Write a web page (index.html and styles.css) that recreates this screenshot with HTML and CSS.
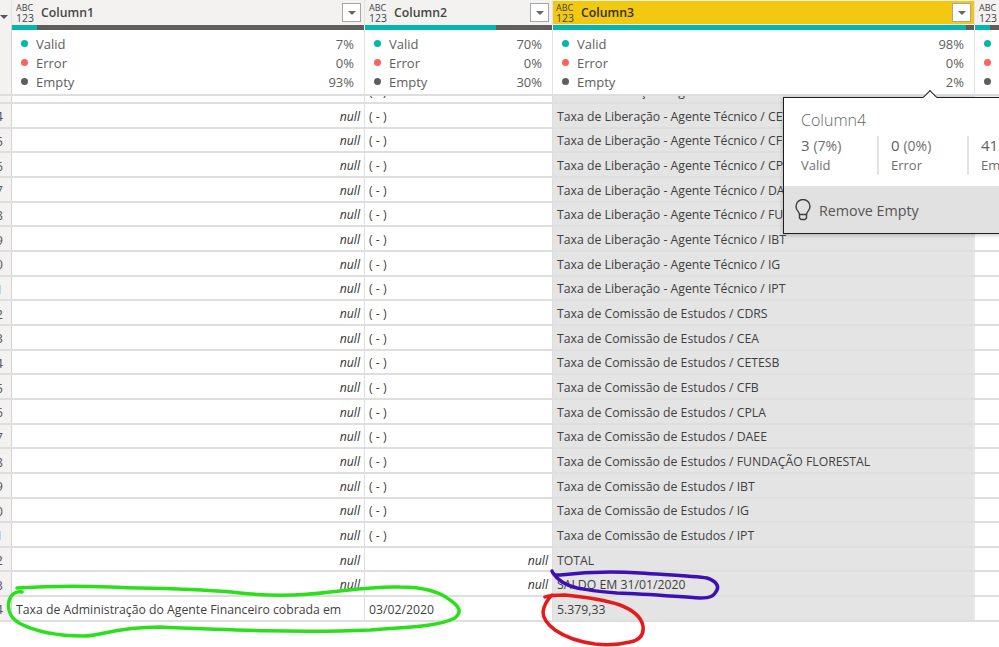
FILE: index.html
```html
<!DOCTYPE html>
<html lang="en">
<head>
    <meta charset="UTF-8">
    <meta name="viewport" content="width=device-width, initial-scale=1.0">
    <title>Column quality</title>
    <link rel="stylesheet" href="styles.css">
</head>
<body>
    <div class="table">
        <div class="row head">
            <div class="cell gutter"><span class="sort-arrow"></span></div>
            <div class="cell"><span class="type"><i>ABC</i><i>123</i></span><span class="name">Column1</span><span class="filter"></span></div>
            <div class="cell"><span class="type"><i>ABC</i><i>123</i></span><span class="name">Column2</span><span class="filter"></span></div>
            <div class="cell selected"><span class="type"><i>ABC</i><i>123</i></span><span class="name">Column3</span><span class="filter"></span></div>
            <div class="cell"><span class="type"><i>ABC</i><i>123</i></span></div>
        </div>

        <div class="row bars">
            <div class="gutter"></div>
            <div class="bar"><span class="ok" style="width: 7%"></span></div>
            <div class="bar"><span class="ok" style="width: 70%"></span></div>
            <div class="bar"><span class="ok" style="width: 98%"></span></div>
            <div class="bar"><span class="ok" style="width: 7%"></span></div>
        </div>

        <div class="row stats">
            <div class="gutter"></div>
            <ul class="quality">
                <li><span class="dot green"></span>Valid<b>7%</b></li>
                <li><span class="dot red"></span>Error<b>0%</b></li>
                <li><span class="dot grey"></span>Empty<b>93%</b></li>
            </ul>
            <ul class="quality">
                <li><span class="dot green"></span>Valid<b>70%</b></li>
                <li><span class="dot red"></span>Error<b>0%</b></li>
                <li><span class="dot grey"></span>Empty<b>30%</b></li>
            </ul>
            <ul class="quality">
                <li><span class="dot green"></span>Valid<b>98%</b></li>
                <li><span class="dot red"></span>Error<b>0%</b></li>
                <li><span class="dot grey"></span>Empty<b>2%</b></li>
            </ul>
            <ul class="quality">
                <li><span class="dot green"></span>Valid<b>7%</b></li>
                <li><span class="dot red"></span>Error<b>0%</b></li>
                <li><span class="dot grey"></span>Empty<b>93%</b></li>
            </ul>
        </div>

        <div class="row data partial">
            <div class="cell gutter"></div>
            <div class="cell"></div>
            <div class="cell">( - )</div>
            <div class="cell selected">Taxa de Liberação - Agente Técnico / CBH</div>
            <div class="cell"></div>
        </div>

        <div class="row data"><div class="cell gutter">24</div><div class="cell null">null</div><div class="cell">( - )</div><div class="cell selected">Taxa de Liberação - Agente Técnico / CETESB</div><div class="cell"></div></div>
        <div class="row data"><div class="cell gutter">25</div><div class="cell null">null</div><div class="cell">( - )</div><div class="cell selected">Taxa de Liberação - Agente Técnico / CFB</div><div class="cell"></div></div>
        <div class="row data"><div class="cell gutter">26</div><div class="cell null">null</div><div class="cell">( - )</div><div class="cell selected">Taxa de Liberação - Agente Técnico / CPLA</div><div class="cell"></div></div>
        <div class="row data"><div class="cell gutter">27</div><div class="cell null">null</div><div class="cell">( - )</div><div class="cell selected">Taxa de Liberação - Agente Técnico / DAEE</div><div class="cell"></div></div>
        <div class="row data"><div class="cell gutter">28</div><div class="cell null">null</div><div class="cell">( - )</div><div class="cell selected">Taxa de Liberação - Agente Técnico / FUNDAÇÃO FLORESTAL</div><div class="cell"></div></div>
        <div class="row data"><div class="cell gutter">29</div><div class="cell null">null</div><div class="cell">( - )</div><div class="cell selected">Taxa de Liberação - Agente Técnico / IBT</div><div class="cell"></div></div>
        <div class="row data"><div class="cell gutter">30</div><div class="cell null">null</div><div class="cell">( - )</div><div class="cell selected">Taxa de Liberação - Agente Técnico / IG</div><div class="cell"></div></div>
        <div class="row data"><div class="cell gutter">31</div><div class="cell null">null</div><div class="cell">( - )</div><div class="cell selected">Taxa de Liberação - Agente Técnico / IPT</div><div class="cell"></div></div>
        <div class="row data"><div class="cell gutter">32</div><div class="cell null">null</div><div class="cell">( - )</div><div class="cell selected">Taxa de Comissão de Estudos / CDRS</div><div class="cell"></div></div>
        <div class="row data"><div class="cell gutter">33</div><div class="cell null">null</div><div class="cell">( - )</div><div class="cell selected">Taxa de Comissão de Estudos / CEA</div><div class="cell"></div></div>
        <div class="row data"><div class="cell gutter">34</div><div class="cell null">null</div><div class="cell">( - )</div><div class="cell selected">Taxa de Comissão de Estudos / CETESB</div><div class="cell"></div></div>
        <div class="row data"><div class="cell gutter">35</div><div class="cell null">null</div><div class="cell">( - )</div><div class="cell selected">Taxa de Comissão de Estudos / CFB</div><div class="cell"></div></div>
        <div class="row data"><div class="cell gutter">36</div><div class="cell null">null</div><div class="cell">( - )</div><div class="cell selected">Taxa de Comissão de Estudos / CPLA</div><div class="cell"></div></div>
        <div class="row data"><div class="cell gutter">37</div><div class="cell null">null</div><div class="cell">( - )</div><div class="cell selected">Taxa de Comissão de Estudos / DAEE</div><div class="cell"></div></div>
        <div class="row data"><div class="cell gutter">38</div><div class="cell null">null</div><div class="cell">( - )</div><div class="cell selected">Taxa de Comissão de Estudos / FUNDAÇÃO FLORESTAL</div><div class="cell"></div></div>
        <div class="row data"><div class="cell gutter">39</div><div class="cell null">null</div><div class="cell">( - )</div><div class="cell selected">Taxa de Comissão de Estudos / IBT</div><div class="cell"></div></div>
        <div class="row data"><div class="cell gutter">40</div><div class="cell null">null</div><div class="cell">( - )</div><div class="cell selected">Taxa de Comissão de Estudos / IG</div><div class="cell"></div></div>
        <div class="row data"><div class="cell gutter">41</div><div class="cell null">null</div><div class="cell">( - )</div><div class="cell selected">Taxa de Comissão de Estudos / IPT</div><div class="cell"></div></div>
        <div class="row data"><div class="cell gutter">42</div><div class="cell null">null</div><div class="cell null">null</div><div class="cell selected">TOTAL</div><div class="cell"></div></div>
        <div class="row data"><div class="cell gutter">43</div><div class="cell null">null</div><div class="cell null">null</div><div class="cell selected">SALDO EM 31/01/2020</div><div class="cell"></div></div>
        <div class="row data"><div class="cell gutter">44</div><div class="cell indent">Taxa de Administração do Agente Financeiro cobrada em</div><div class="cell">03/02/2020</div><div class="cell selected">5.379,33</div><div class="cell"></div></div>
    </div>

    <div class="tooltip">
        <h4>Column4</h4>
        <div class="counts">
            <div class="count"><strong>3 <small>(7%)</small></strong><span>Valid</span></div>
            <div class="count"><strong>0 <small>(0%)</small></strong><span>Error</span></div>
            <div class="count"><strong>41 <small>(93%)</small></strong><span>Empty</span></div>
        </div>
        <div class="action">
            <svg width="18" height="22" viewBox="0 0 18 22" fill="none" stroke="#3c3c3c" stroke-width="1.4">
                <path d="M5.5 15.5c0-2.6-3.5-4-3.500-8a6.900 6.900 0 0 1 14 0c0 4-3.500 5.400-3.500 8z"/>
                <path d="M5.500 15.500v3.500l1.500 1.500h4l1.500-1.500v-3.500"/>
            </svg>
            Remove Empty
        </div>
    </div>

    <!-- marker scribbles drawn over the screenshot -->
    <svg class="scribbles" width="999" height="647" viewBox="0 0 999 647" fill="none" stroke-width="3.500" stroke-linecap="round" stroke-linejoin="round">
        <path stroke="#2be01a" d="M22 592C16 591 11 594 9 601C7 610 11 618 19 623C32 630 50 636 84 636C100 636 115 627 160 627C230 630 300 633 370 630C400 627 435 628 455 618C462 612 460 607 450 600C440 592 425 587 400 587C375 586 350 590 330 592C300 596 270 596 240 593C190 588 150 589 110 587C80 586 50 586 17 588"/>
        <path stroke="#3d10b4" d="M552 571C553 575 555 575 560 575C585 572 610 571 640 573C670 575 695 576 707 578C716 581 719 586 717 590C714 596 711 598 700 598C680 597 650 594 617 593C600 592 590 590 577 588C565 585 558 581 553 573"/>
        <path stroke="#e41a1c" d="M545 597C550 595 555 595 565 595C585 597 605 600 620 605C633 610 641 616 643 626C644 634 640 640 630 642C618 645 605 645 595 644C580 642 565 637 555 630C547 624 543 618 543 612C544 605 547 600 552 595"/>
    </svg>
</body>
</html>
```

FILE: styles.css
```css
body {
    margin: 0;
    height: 647px;
    overflow: hidden;
    background-color: #fff;
    font-family: "Open Sans", "Noto Sans", sans-serif;
    font-size: 12.250px;
    color: #3f3f3f;
}

/* the shot is cropped: row numbers and the last column run off the edges */
.table {
    width: 1217px;
    margin-left: -22px;
}

.row {
    display: grid;
    grid-template-columns: 34px 353px 188px 422px 220px;
}

.gutter {
    background-color: #f3f2f1;
    border-right: 1px solid #d4d4d4;
}

.cell {
    display: flex;
    align-items: center;
    min-width: 0;
    white-space: nowrap;
    overflow: hidden;
}

/* header */
.head {
    height: 25px;
    background-color: #f3f2f1;
}

.head .cell {
    padding: 1px 0 1px 4px;
    border-right: 1px solid #e3e3e3;
}

.head .gutter {
    padding: 0;
}

.sort-arrow {
    margin-left: 22px;
    margin-top: 9px;
    border-left: 4px solid transparent;
    border-right: 4px solid transparent;
    border-top: 4px solid #555;
}

.head .selected {
    padding: 1px 0;
    background-color: #f2c811;
    background-clip: content-box;
    font-weight: 700;
}

.type {
    display: flex;
    flex-direction: column;
    flex-shrink: 0;
    width: 25px;
    line-height: 10px;
    color: #444;
}

.head .selected .type {
    width: 28px;
    padding-left: 3px;
    box-sizing: border-box;
    font-weight: 400;
}

.type i {
    font-style: normal;
    font-size: 9px;
}

.type i + i {
    font-size: 10.500px;
}

.name {
    flex: 1;
    font-size: 12.250px;
    font-weight: 600;
    color: #484644;
}

.head .selected .name {
    color: #33302a;
}

.filter {
    display: flex;
    align-items: center;
    justify-content: center;
    box-sizing: border-box;
    width: 19px;
    height: 19px;
    margin-right: 3px;
    background-color: #fff;
    border: 1px solid #a6a6a6;
}

.filter::after {
    content: "";
    border-left: 4px solid transparent;
    border-right: 4px solid transparent;
    border-top: 4px solid #666;
}

/* column quality */
.bars {
    height: 5px;
}

.bar {
    background-color: #605e5c;
    border-right: 1px solid #fff;
}

.ok {
    display: block;
    height: 100%;
    background-color: #01b8aa;
}

.stats {
    height: 66px;
    box-sizing: border-box;
    border-bottom: 2px solid #dedede;
}

.quality {
    margin: 0;
    padding: 4px 10px 0 9px;
    list-style: none;
    border-right: 1px solid #e3e3e3;
    font-size: 13px;
    color: #605e5c;
}

.quality li {
    display: flex;
    align-items: center;
    height: 19px;
}

.quality b {
    margin-left: auto;
    font-weight: 400;
}

.dot {
    width: 7px;
    height: 7px;
    margin-right: 8px;
    border-radius: 50%;
}

.green { background-color: #01b8aa; }
.red { background-color: #fd625e; }
.grey { background-color: #605e5c; }

/* data rows */
.data {
    height: 24.670px;
    box-sizing: border-box;
    border-bottom: 2px solid #dedede;
}

.data .cell {
    padding: 2px 4px 0;
    border-right: 1px solid #dedede;
}

.data .gutter {
    justify-content: flex-end;
    padding: 2px 8px 0 0;
    border-right: 1px solid #d4d4d4;
    font-size: 13px;
    color: #555;
}

.data .selected {
    background-color: #e4e4e4;
    border-right: 2px solid #e8e8e8;
}

.data .null {
    justify-content: flex-end;
    font-style: italic;
    color: #333;
}

.partial.data {
    height: 8px;
}

/* only the descenders of this row stick out under the quality panel */
.partial .cell,
.data.partial .cell {
    align-items: flex-end;
    padding-top: 0;
    line-height: 20.500px;
}

/* hover card for Column4 */
.tooltip {
    position: absolute;
    top: 97px;
    left: 783px;
    width: 300px;
    box-sizing: border-box;
    background-color: #fff;
    border: 1px solid #1f1f1f;
    box-shadow: 0 1px 4px rgba(0, 0, 0, 0.25);
    color: #707070;
}

.tooltip::before {
    content: "";
    position: absolute;
    top: -6px;
    left: 141px;
    width: 9px;
    height: 9px;
    background-color: #fff;
    border-left: 1px solid #1f1f1f;
    border-top: 1px solid #1f1f1f;
    transform: rotate(45deg);
}

.tooltip h4 {
    margin: 0;
    padding: 11px 0 0 17px;
    font-size: 16px;
    line-height: 22px;
    font-weight: 300;
    color: #666;
}

.counts {
    display: flex;
    padding: 5px 0 11px 17px;
}

.count {
    display: flex;
    flex-direction: column;
    width: 76px;
    margin-right: 12px;
    border-right: 2px solid #e2e2e2;
    font-size: 13px;
    line-height: 19px;
    white-space: nowrap;
}

.count span {
    padding-top: 1px;
}

.count strong {
    font-weight: 400;
    font-size: 15px;
    color: #606060;
}

.count small {
    font-size: 14px;
    color: #707070;
}

.count:last-child {
    width: auto;
    border-right: 0;
}

.action {
    display: flex;
    align-items: center;
    gap: 7px;
    height: 46px;
    padding: 1px 0 0 10px;
    background-color: #e1e1e1;
    font-size: 14.300px;
    color: #555;
}

.scribbles {
    position: absolute;
    top: 0;
    left: 0;
    pointer-events: none;
}
```
